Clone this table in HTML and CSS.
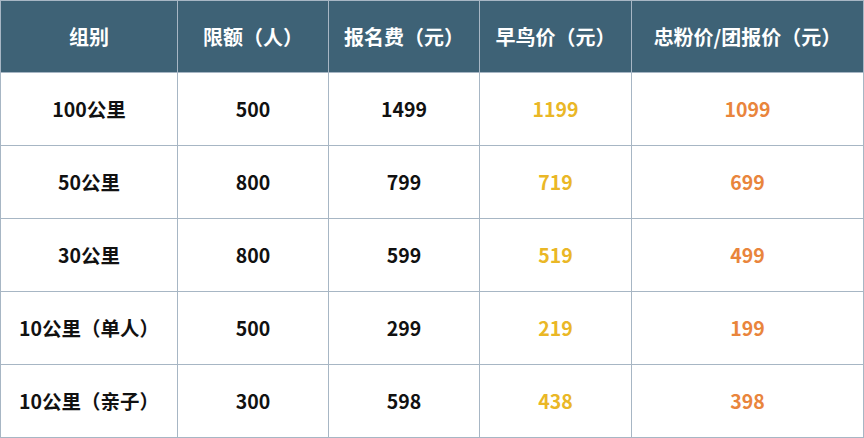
FILE: index.html
```html
<!DOCTYPE html>
<html lang="zh-CN">
<head>
<meta charset="utf-8">
<link rel="stylesheet" href="styles.css">
</head>
<body>
<table class="price-table">
  <colgroup>
    <col class="c1"><col class="c2"><col class="c3"><col class="c4"><col class="c5">
  </colgroup>
  <thead>
    <tr>
      <th>组别</th>
      <th>限额（人）</th>
      <th>报名费（元）</th>
      <th>早鸟价（元）</th>
      <th>忠粉价/团报价（元）</th>
    </tr>
  </thead>
  <tbody>
    <tr><td>100公里</td><td>500</td><td>1499</td><td class="early">1199</td><td class="fan">1099</td></tr>
    <tr><td>50公里</td><td>800</td><td>799</td><td class="early">719</td><td class="fan">699</td></tr>
    <tr><td>30公里</td><td>800</td><td>599</td><td class="early">519</td><td class="fan">499</td></tr>
    <tr><td>10公里（单人）</td><td>500</td><td>299</td><td class="early">219</td><td class="fan">199</td></tr>
    <tr><td>10公里（亲子）</td><td>300</td><td>598</td><td class="early">438</td><td class="fan">398</td></tr>
  </tbody>
</table>
</body>
</html>
```
FILE: styles.css
```css
html, body {
  margin: 0;
  padding: 0;
  background: #ffffff;
}
.price-table {
  width: 863px;
  border-collapse: collapse;
  table-layout: fixed;
  font-family: "Noto Sans CJK SC", "Noto Sans", sans-serif;
  font-weight: 700;
  font-size: 19.5px;
}
.c1 { width: 177px; }
.c2 { width: 151px; }
.c3 { width: 151px; }
.c4 { width: 152px; }
.c5 { width: 232px; }
.price-table th,
.price-table td {
  border: 1px solid #a7b6c4;
  text-align: center;
  padding: 0;
  line-height: 1.2;
}
.price-table th {
  height: 71px;
  background: #3e6276;
  color: #ffffff;
  font-size: 20px;
}
.price-table td {
  height: 72px;
  color: #111111;
}
.price-table td.early { color: #eab726; }
.price-table td.fan { color: #e9853c; }
```
